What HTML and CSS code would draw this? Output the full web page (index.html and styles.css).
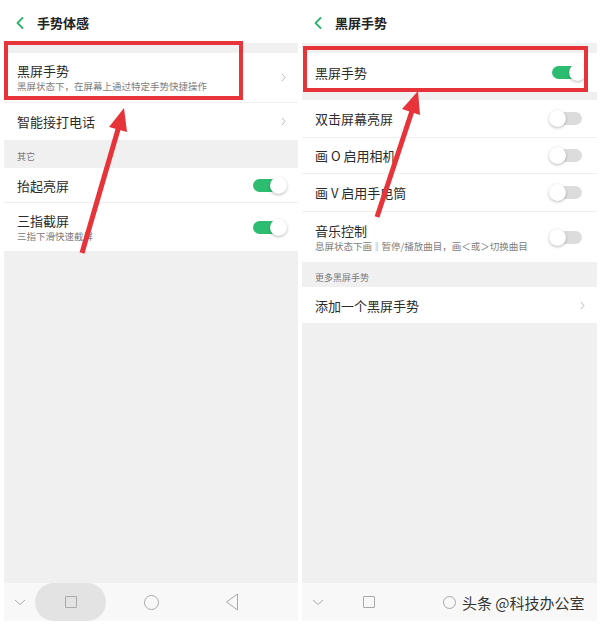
FILE: index.html
```html
<!DOCTYPE html>
<html lang="zh-CN">
<head>
<meta charset="utf-8">
<title>黑屏手势</title>
<link rel="stylesheet" href="styles.css">
</head>
<body>
<div class="screens">
  <section class="panel panel-left">
    <header class="bar">
      <svg class="back" width="8" height="12" viewBox="0 0 8 12"><polyline points="6.5,1 1.5,6 6.5,11" fill="none" stroke="#2eb46e" stroke-width="1.8" stroke-linecap="round" stroke-linejoin="round"/></svg>
      <h1 class="bar-title">手势体感</h1>
    </header>
    <div class="group first">
      <div class="row h49">
        <div class="text"><div class="title">黑屏手势</div><div class="sub">黑屏状态下，在屏幕上通过特定手势快捷操作</div></div>
        <svg class="chev" width="5" height="9" viewBox="0 0 5 9"><polyline points="1,1 4,4.5 1,8" fill="none" stroke="#b8b8b8" stroke-width="1"/></svg>
      </div>
      <div class="row h37">
        <div class="text"><div class="title">智能接打电话</div></div>
        <svg class="chev" width="5" height="9" viewBox="0 0 5 9"><polyline points="1,1 4,4.5 1,8" fill="none" stroke="#b8b8b8" stroke-width="1"/></svg>
      </div>
    </div>
    <div class="label l28">其它</div>
    <div class="group">
      <div class="row h34">
        <div class="text"><div class="title">抬起亮屏</div></div>
        <span class="toggle on"></span>
      </div>
      <div class="row h48">
        <div class="text"><div class="title">三指截屏</div><div class="sub">三指下滑快速截屏</div></div>
        <span class="toggle on"></span>
      </div>
    </div>
    <nav class="nav">
      <svg class="nav-down" width="12" height="7" viewBox="0 0 12 7"><polyline points="1,1 6,5.5 11,1" fill="none" stroke="#aaa" stroke-width="1"/></svg>
      <span class="pill"><span class="sq"></span></span>
      <span class="circ big"></span>
      <svg class="tri" width="14" height="18" viewBox="0 0 14 18"><polygon points="12.5,1 1.5,9 12.5,17" fill="none" stroke="#a8a8a8" stroke-width="1" stroke-linejoin="round"/></svg>
    </nav>
  </section>

  <section class="panel panel-right">
    <header class="bar">
      <svg class="back" width="8" height="12" viewBox="0 0 8 12"><polyline points="6.5,1 1.5,6 6.5,11" fill="none" stroke="#2eb46e" stroke-width="1.8" stroke-linecap="round" stroke-linejoin="round"/></svg>
      <h1 class="bar-title">黑屏手势</h1>
    </header>
    <div class="group first">
      <div class="row h39">
        <div class="text"><div class="title">黑屏手势</div></div>
        <span class="toggle on"></span>
      </div>
    </div>
    <div class="group second">
      <div class="row h37">
        <div class="text"><div class="title">双击屏幕亮屏</div></div>
        <span class="toggle"></span>
      </div>
      <div class="row h35">
        <div class="text"><div class="title">画 O 启用相机</div></div>
        <span class="toggle"></span>
      </div>
      <div class="row h37">
        <div class="text"><div class="title">画 V 启用手电筒</div></div>
        <span class="toggle"></span>
      </div>
      <div class="row h50">
        <div class="text"><div class="title">音乐控制</div><div class="sub">息屏状态下画‖暂停/播放曲目，画＜或＞切换曲目</div></div>
        <span class="toggle"></span>
      </div>
    </div>
    <div class="label l25">更多黑屏手势</div>
    <div class="group">
      <div class="row h36">
        <div class="text"><div class="title">添加一个黑屏手势</div></div>
        <svg class="chev" width="5" height="9" viewBox="0 0 5 9"><polyline points="1,1 4,4.5 1,8" fill="none" stroke="#b8b8b8" stroke-width="1"/></svg>
      </div>
    </div>
    <nav class="nav nav-right">
      <svg class="nav-down" width="12" height="7" viewBox="0 0 12 7"><polyline points="1,1 6,5.5 11,1" fill="none" stroke="#aaa" stroke-width="1"/></svg>
      <span class="sq-slot"><span class="sq"></span></span>
      <span class="circ small"></span>
      <span class="watermark">头条 @科技办公室</span>
    </nav>
  </section>
</div>

<svg class="marks" width="600" height="625" viewBox="0 0 600 625">
  <rect x="6" y="43" width="235" height="55" fill="none" stroke="#e7333a" stroke-width="4"/>
  <rect x="305" y="48" width="281" height="42" fill="none" stroke="#e7333a" stroke-width="4"/>
  <line x1="82" y1="253" x2="119" y2="126" stroke="#e7333a" stroke-width="5"/>
  <polygon points="124,108 127,132 109,127" fill="#e7333a"/>
  <line x1="377" y1="217" x2="413" y2="108" stroke="#e7333a" stroke-width="5"/>
  <polygon points="418,91 420,115 402,109" fill="#e7333a"/>
</svg>
</body>
</html>
```

FILE: styles.css
```css
* { box-sizing: border-box; }

body {
  margin: 0;
  background: #ffffff;
  font-family: "Noto Sans CJK SC", "Noto Sans", sans-serif;
  color: #2b2b2b;
  position: relative;
  width: 600px;
  height: 625px;
  overflow: hidden;
}

.screens {
  display: flex;
  gap: 4px;
  padding-left: 4px;
  height: 621px;
}

.panel {
  display: flex;
  flex-direction: column;
  background: #f0f0f0;
  height: 621px;
}

.panel-left { width: 294px; }
.panel-right { width: 295px; }

.bar {
  height: 43px;
  background: #ffffff;
  display: flex;
  align-items: center;
  padding-left: 12px;
  padding-top: 3px;
}

.back { margin-right: 13px; flex: none; }

.bar-title {
  margin: 0;
  font-size: 13px;
  font-weight: 700;
  color: #222;
  line-height: 16px;
}

.group.first { margin-top: 10px; }
.group.second { margin-top: 8px; }

.row {
  box-sizing: content-box;
  display: flex;
  align-items: center;
  justify-content: space-between;
  background: #ffffff;
  padding: 0 14px 0 13px;
}

.row + .row { border-top: 1px solid #efefef; }

.h34 { height: 34px; }
.h35 { height: 35px; }
.h36 { height: 36px; }
.h37 { height: 37px; }
.h39 { height: 39px; }
.h48 { height: 48px; }
.h49 { height: 49px; }
.h50 { height: 50px; }

.title {
  font-size: 13px;
  line-height: 17px;
  color: #2b2b2b;
}

.sub {
  font-size: 9.5px;
  line-height: 13px;
  color: #7d7d7d;
  margin-top: 1px;
  white-space: nowrap;
}

.chev { flex: none; margin-right: -2px; }

.label {
  font-size: 9px;
  color: #777;
  padding-left: 13px;
  display: flex;
  align-items: flex-end;
  line-height: 12px;
}
.l28 { height: 28px; padding-bottom: 5px; }
.l25 { height: 25px; padding-bottom: 3px; }

.toggle {
  position: relative;
  flex: none;
  width: 30px;
  height: 13px;
  border-radius: 7px;
  background: #dcdcdc;
  margin-right: 1px;
}
.toggle::after {
  content: "";
  position: absolute;
  top: -2px;
  left: -3px;
  width: 17px;
  height: 17px;
  border-radius: 50%;
  background: #ffffff;
  box-shadow: 0 1px 3px rgba(0, 0, 0, 0.28);
}
.toggle.on { background: #2dbd71; }
.toggle.on::after { left: auto; right: -4px; }

.nav {
  margin-top: auto;
  height: 38px;
  background: #f8f8f8;
  display: flex;
  align-items: center;
  padding-left: 10px;
}

.nav-down { flex: none; }

.pill {
  margin-left: 9px;
  width: 71px;
  height: 38px;
  border-radius: 19px;
  background: #e3e3e3;
  display: flex;
  align-items: center;
  justify-content: center;
}

.sq {
  width: 12px;
  height: 12px;
  border: 1px solid #a9a9a9;
  border-radius: 1px;
}

.circ {
  flex: none;
  border: 1px solid #a9a9a9;
  border-radius: 50%;
}
.circ.big {
  width: 15px;
  height: 15px;
  margin-left: 38px;
}
.tri { flex: none; margin-left: 66px; }

.sq-slot {
  margin-left: 30px;
  width: 30px;
  display: flex;
  justify-content: center;
}
.circ.small {
  width: 13px;
  height: 13px;
  margin-left: 59px;
}
.watermark {
  margin-left: 6px;
  font-size: 15px;
  color: #333333;
  white-space: nowrap;
  text-shadow: 0 0 1px #fff, 0 0 2px #fff;
}

.marks {
  position: absolute;
  top: 0;
  left: 0;
  pointer-events: none;
}
```
